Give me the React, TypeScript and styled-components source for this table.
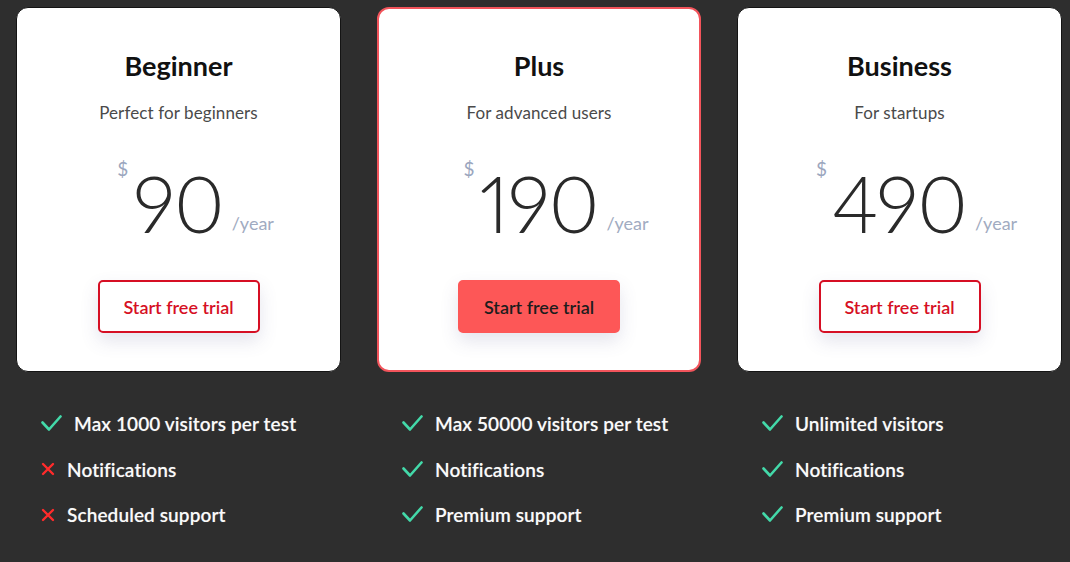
import React from "react";
import styled, { createGlobalStyle } from "styled-components";

const Global = createGlobalStyle`
  html, body { margin: 0; padding: 0; background: #2e2e2e; }
  body { font-family: Lato, "Open Sans", sans-serif; }
`;

const Page = styled.div`
  width: 1070px;
  height: 562px;
  box-sizing: border-box;
  padding: 7px 0 0 16px;
  background: #2e2e2e;
  overflow: hidden;
`;

const Grid = styled.div`
  display: grid;
  grid-template-columns: 325px 324px 325px;
  column-gap: 36px;
`;

const Card = styled.div<{ $featured?: boolean }>`
  box-sizing: border-box;
  height: 365px;
  background: #fff;
  border-radius: 12px;
  border: ${(p) => (p.$featured ? "2px solid #f2545b" : "1px solid #141414")};
  display: flex;
  flex-direction: column;
  align-items: center;
  padding-top: ${(p) => (p.$featured ? "41px" : "42px")};
`;

const Title = styled.h2`
  margin: 0;
  font-size: 27px;
  line-height: 32px;
  font-weight: 700;
  color: #111;
`;

const Subtitle = styled.p`
  margin: 19px 0 0;
  font-size: 17px;
  line-height: 24px;
  font-weight: 400;
  color: #4a4a4a;
  letter-spacing: 0.1px;
`;

const PriceRow = styled.div`
  margin-top: 40px;
  width: 100%;
  display: grid;
  grid-template-columns: 1fr auto 1fr;
  height: 76px;
`;

const Currency = styled.span`
  justify-self: end;
  align-self: start;
  margin: -7px 5px 0 0;
  font-size: 19px;
  line-height: 22px;
  color: #9ba6be;
`;

const Amount = styled.span`
  font-size: 78px;
  line-height: 76px;
  font-weight: 300;
  color: #2a2a2a;
  letter-spacing: -1px;
  font-variant-numeric: proportional-nums;
  font-feature-settings: "pnum" 1;
`;

const Period = styled.span`
  justify-self: start;
  align-self: end;
  margin: 0 0 7px 8px;
  font-size: 18px;
  line-height: 22px;
  color: #a1abc1;
`;

const Button = styled.button<{ $filled?: boolean }>`
  margin-top: 39px;
  width: 162px;
  height: 53px;
  box-sizing: border-box;
  border-radius: 5px;
  border: 2px solid ${(p) => (p.$filled ? "#fd5757" : "#d60f24")};
  background: ${(p) => (p.$filled ? "#fd5757" : "#fff")};
  color: ${(p) => (p.$filled ? "#1d1d1d" : "#d60f24")};
  font-family: Lato, sans-serif;
  font-size: 18px;
  font-weight: 600;
  box-shadow: 0 8px 18px rgba(90, 90, 140, 0.16);
  cursor: pointer;
`;

const Features = styled.ul`
  margin: 29px 0 0;
  padding: 0 0 0 25px;
  list-style: none;
`;

const Feature = styled.li`
  height: 45.5px;
  display: flex;
  align-items: center;
  gap: 12px;
  font-size: 19px;
  font-weight: 600;
  letter-spacing: 0.1px;
  color: #fafafa;
  text-shadow: 0 0 1px rgba(255, 255, 255, 0.3);
`;

const IconBox = styled.span`
  display: inline-flex;
  align-items: center;
`;

const Check = () => (
  <IconBox>
    <svg width="21" height="17" viewBox="0 0 21 17">
      <polyline
        points="1.5,7.5 8,14.5 19.5,1.5"
        fill="none"
        stroke="#43d9a9"
        strokeWidth="2.6"
        strokeLinecap="round"
        strokeLinejoin="round"
      />
    </svg>
  </IconBox>
);

const Cross = () => (
  <IconBox>
    <svg width="14" height="14" viewBox="0 0 14 14">
      <path
        d="M2 2 L12 12 M12 2 L2 12"
        fill="none"
        stroke="#ff2b2b"
        strokeWidth="2.4"
        strokeLinecap="round"
      />
    </svg>
  </IconBox>
);

type Plan = {
  name: string;
  sub: string;
  price: string;
  featured?: boolean;
  features: { ok: boolean; text: string }[];
};

const plans: Plan[] = [
  {
    name: "Beginner",
    sub: "Perfect for beginners",
    price: "90",
    features: [
      { ok: true, text: "Max 1000 visitors per test" },
      { ok: false, text: "Notifications" },
      { ok: false, text: "Scheduled support" },
    ],
  },
  {
    name: "Plus",
    sub: "For advanced users",
    price: "190",
    featured: true,
    features: [
      { ok: true, text: "Max 50000 visitors per test" },
      { ok: true, text: "Notifications" },
      { ok: true, text: "Premium support" },
    ],
  },
  {
    name: "Business",
    sub: "For startups",
    price: "490",
    features: [
      { ok: true, text: "Unlimited visitors" },
      { ok: true, text: "Notifications" },
      { ok: true, text: "Premium support" },
    ],
  },
];

export default function App() {
  return (
    <Page>
      <Global />
      <Grid>
        {plans.map((p) => (
          <Card key={p.name} $featured={p.featured}>
            <Title>{p.name}</Title>
            <Subtitle>{p.sub}</Subtitle>
            <PriceRow>
              <Currency>$</Currency>
              <Amount>{p.price}</Amount>
              <Period>/year</Period>
            </PriceRow>
            <Button $filled={p.featured}>Start free trial</Button>
          </Card>
        ))}
        {plans.map((p) => (
          <Features key={p.name + "-f"}>
            {p.features.map((f) => (
              <Feature key={f.text}>
                {f.ok ? <Check /> : <Cross />}
                {f.text}
              </Feature>
            ))}
          </Features>
        ))}
      </Grid>
    </Page>
  );
}
